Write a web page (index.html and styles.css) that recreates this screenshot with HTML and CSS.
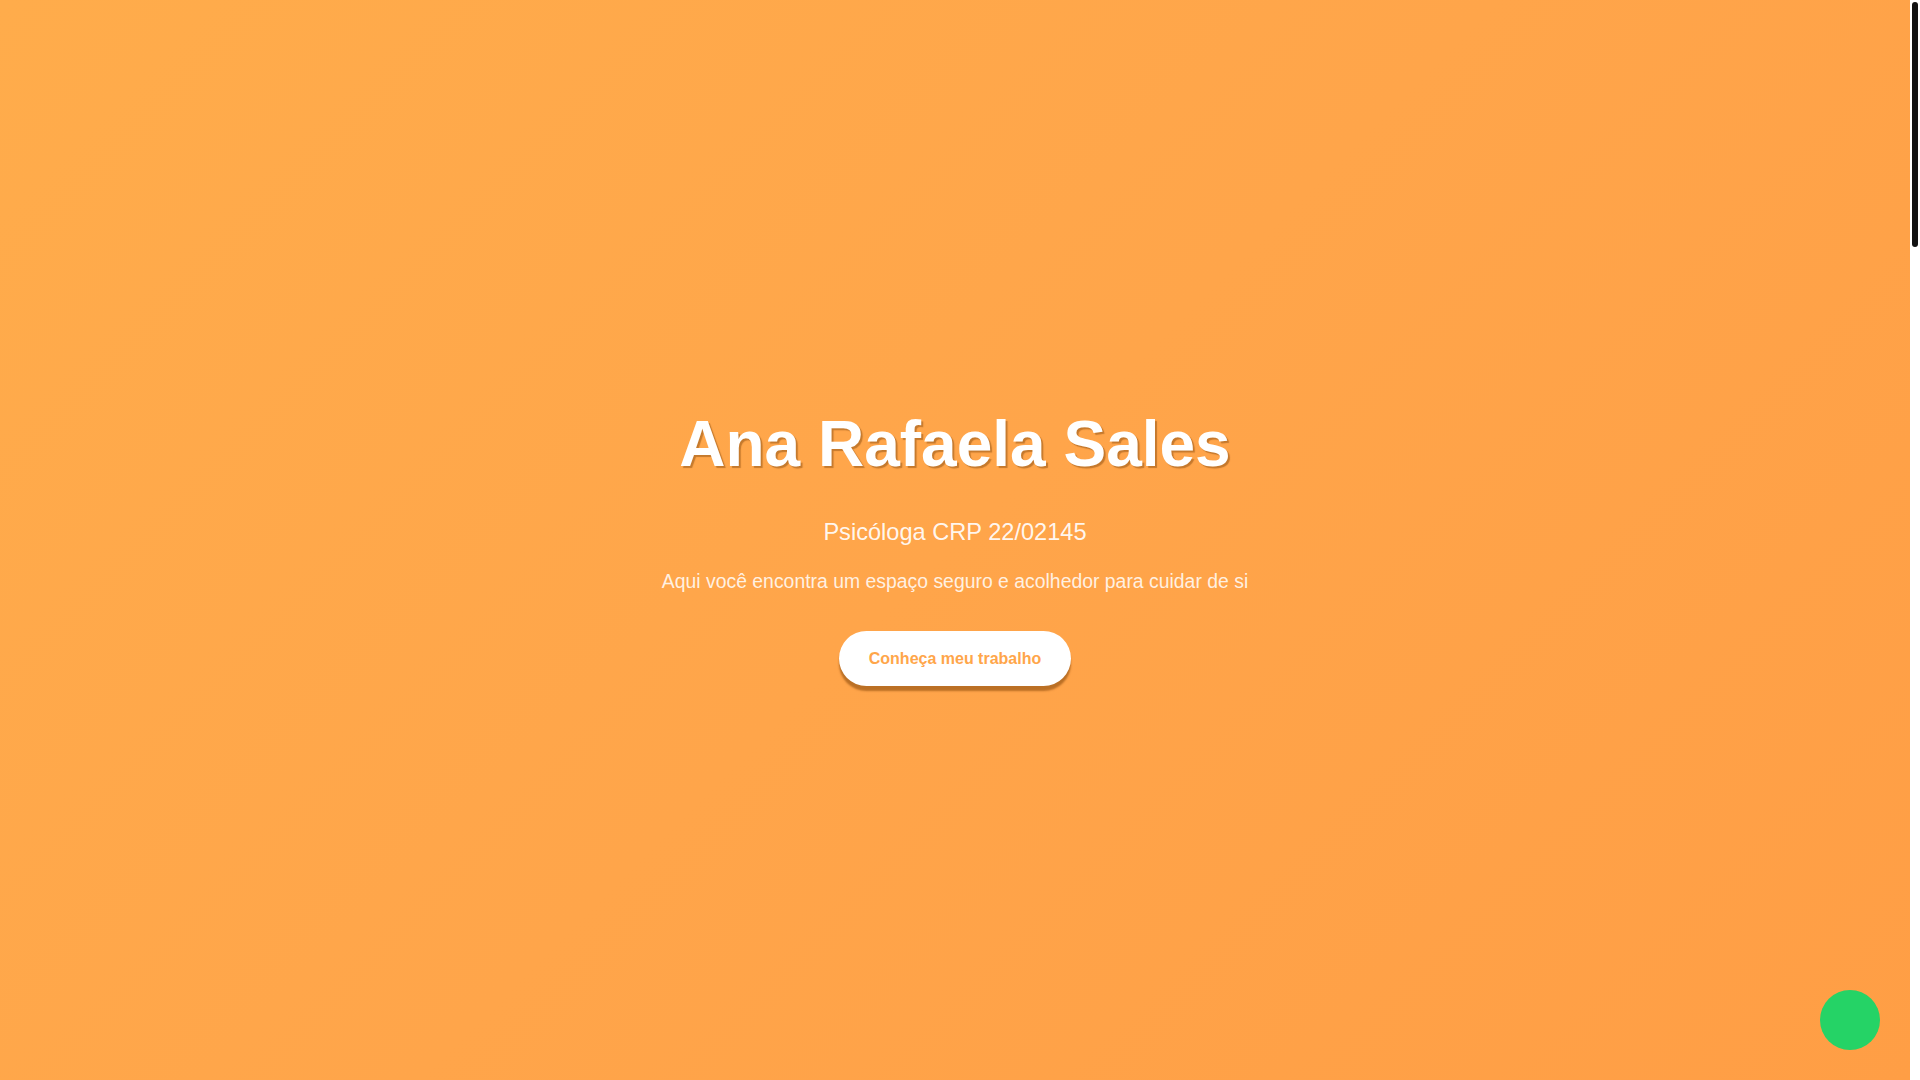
FILE: index.html
```html
<!DOCTYPE html>
<html lang="pt-BR">
<head>
<meta charset="utf-8">
<title>Ana Rafaela Sales - Psicóloga</title>
<link rel="stylesheet" href="styles.css">
</head>
<body>
  <div class="page">
    <section class="hero">
      <div class="hero-content">
        <h1 class="hero-title">Ana Rafaela Sales</h1>
        <p class="hero-subtitle">Psicóloga CRP 22/02145</p>
        <p class="hero-text">Aqui você encontra um espaço seguro e acolhedor para cuidar de si</p>
        <a class="hero-button" href="#sobre">Conheça meu trabalho</a>
      </div>
    </section>
    <section class="section" id="sobre"></section>
  </div>
  <div class="scrollbar" aria-hidden="true">
    <div class="scrollbar-thumb"></div>
  </div>
  <a class="whatsapp" href="#" aria-label="WhatsApp"></a>
</body>
</html>
```
FILE: styles.css
```css
html, body {
  margin: 0;
  padding: 0;
  height: 100%;
  overflow: hidden;
}

body {
  display: flex;
  font-family: "Liberation Sans", Arial, sans-serif;
  background: #ffffff;
  color: #333333;
}

.page {
  flex: 1;
  height: 100vh;
  overflow: hidden;
}

.scrollbar {
  box-sizing: border-box;
  width: 10px;
  height: 100vh;
  padding: 2px 2px 0;
  background: #ffffff;
}

.scrollbar-thumb {
  height: 245px;
  border-radius: 4px;
  background: #111111;
}

.hero {
  box-sizing: border-box;
  height: 100vh;
  padding-top: 12px;
  background: linear-gradient(135deg, #ffac4b 0%, #ffa54a 50%, #ff9e45 100%);
  display: flex;
  align-items: center;
  justify-content: center;
  text-align: center;
}

.hero-content {
  display: flex;
  flex-direction: column;
  align-items: center;
}

.hero-title {
  margin: 0 0 35px;
  font-size: 64px;
  line-height: 1.2;
  font-weight: 700;
  color: #ffffff;
  text-shadow: 2px 2px 1px rgba(110, 55, 0, 0.4);
}

.hero-subtitle {
  margin: 0 0 23px;
  font-size: 23.6px;
  line-height: 29px;
  color: rgba(255, 255, 255, 0.92);
}

.hero-text {
  margin: 0 0 37px;
  font-size: 19.4px;
  line-height: 1.2;
  color: rgba(255, 255, 255, 0.85);
}

.hero-button {
  display: inline-block;
  padding: 18px 30px;
  font-size: 16px;
  line-height: 19px;
  font-weight: 700;
  color: #ffa64a;
  background: #ffffff;
  border-radius: 30px;
  text-decoration: none;
  box-shadow: 0 5px 2px rgba(120, 60, 0, 0.5);
}

.section {
  height: 1220px;
  background: #ffffff;
}

.whatsapp {
  position: fixed;
  right: 40px;
  bottom: 30px;
  width: 60px;
  height: 60px;
  border-radius: 50%;
  background: #25d366;
}
```
